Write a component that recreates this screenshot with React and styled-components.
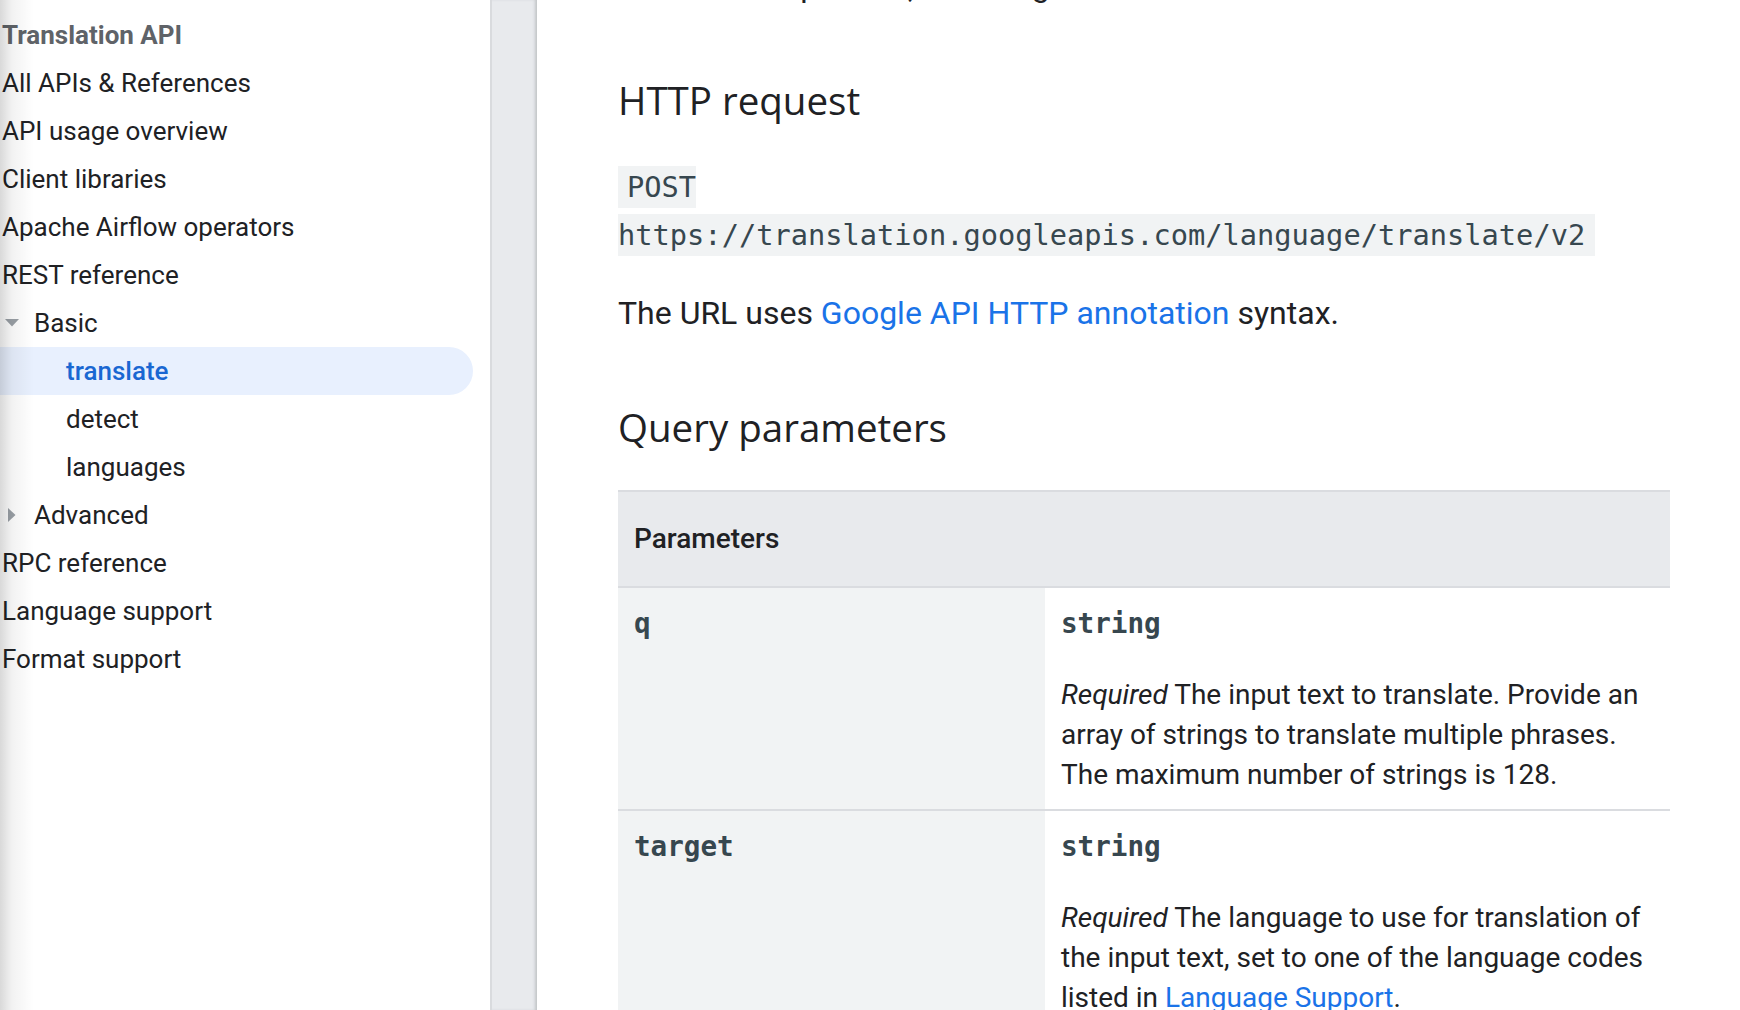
import React from "react";
import styled, { createGlobalStyle, css } from "styled-components";

const GlobalStyle = createGlobalStyle`
  html, body {
    margin: 0;
    padding: 0;
    height: 100%;
    overflow: hidden;
    background: #fff;
  }
  body {
    font-family: Roboto, "Noto Sans", Arial, sans-serif;
    color: #202124;
    -webkit-font-smoothing: antialiased;
  }
  #root {
    height: 100%;
  }
`;

const Page = styled.div`
  display: flex;
  width: 1740px;
  height: 1010px;
  overflow: hidden;
`;

const Sidebar = styled.nav`
  position: relative;
  flex: none;
  width: 490px;
  padding-top: 11px;
  box-sizing: border-box;
  background: #fff;

  /* scroll shadow lying over the nav on its left edge */
  &::after {
    content: "";
    position: absolute;
    left: 0;
    top: 0;
    bottom: 0;
    width: 40px;
    pointer-events: none;
    background: linear-gradient(
      to right,
      rgba(0, 0, 0, 0.15),
      rgba(0, 0, 0, 0.05) 12px,
      rgba(0, 0, 0, 0) 34px
    );
  }
`;

const NavList = styled.ul`
  list-style: none;
  margin: 0;
  padding: 0;
`;

const NavRow = styled.li`
  display: flex;
  align-items: center;
  height: 48px;
  margin-right: 17px;
  padding-left: ${(p) => (p.$depth === 2 ? "66px" : p.$depth === 1 ? "0" : "2px")};
  font-size: 26px;
  line-height: 48px;
  white-space: nowrap;
  color: #202124;
  border-radius: 0 24px 24px 0;

  ${(p) =>
    p.$title &&
    css`
      color: #5f6368;
      font-weight: 700;
    `}

  ${(p) =>
    p.$active &&
    css`
      background: #e8f0fe;
      color: #1967d2;
      font-weight: 500;
    `}
`;

const Expander = styled.span`
  display: flex;
  align-items: center;
  justify-content: center;
  width: 23px;
  height: 48px;
  margin-right: 11px;
`;

const Gutter = styled.div`
  flex: none;
  width: 47px;
  box-sizing: border-box;
  background: #e8eaed;
  border-left: 2px solid #d9dbde;
  box-shadow: inset -3px 0 3px -1px rgba(60, 64, 67, 0.22);
`;

const Main = styled.main`
  flex: 1;
  min-width: 0;
  overflow: hidden;
  padding: 0 70px 0 81px;
`;

const Article = styled.article`
  width: 1052px;
`;

const Lead = styled.p`
  margin: -38px 0 0;
  font-size: 32px;
  line-height: 48px;
`;

const Heading = styled.h2`
  margin: 66px 0 0;
  font-family: "Open Sans", Roboto, sans-serif;
  font-size: 38.5px;
  line-height: 48px;
  font-weight: 400;
  color: #202124;
`;

const Request = styled.div`
  display: flex;
  flex-direction: column;
  align-items: flex-start;
  gap: 6px;
  margin-top: 42px;
`;

const CodeLine = styled.code`
  display: inline-block;
  height: 42px;
  line-height: 42px;
  padding: 0 ${(p) => p.$right || 0}px 0 ${(p) => p.$left || 0}px;
  font-family: "DejaVu Sans Mono", "Liberation Mono", monospace;
  font-size: 28.7px;
  color: #37474f;
  background: #f1f3f4;
`;

const Text = styled.p`
  margin: 33px 0 0;
  font-size: 32px;
  line-height: 48px;
`;

const Link = styled.a`
  color: #1a73e8;
  text-decoration: none;
`;

const ParamTable = styled.div`
  margin-top: 39px;
  border-top: 2px solid #dadce0;
`;

const HeaderCell = styled.div`
  padding: 27px 16px;
  background: #e8eaed;
  font-size: 28px;
  line-height: 40px;
  font-weight: 500;
`;

const ParamRow = styled.div`
  display: grid;
  grid-template-columns: 427px 1fr;
  border-top: 2px solid #dadce0;
`;

const Cell = styled.div`
  padding: 16px 16px 14px;
  background: ${(p) => (p.$name ? "#f1f3f4" : "#fff")};
  font-size: 28px;
  line-height: 40px;
`;

const Mono = styled.code`
  display: block;
  font-family: "DejaVu Sans Mono", "Liberation Mono", monospace;
  font-size: 27.6px;
  line-height: 40px;
  font-weight: 700;
  color: #37474f;
`;

const Desc = styled.p`
  margin: 31px 0 0;
`;

const ArrowDown = () => (
  <svg width="14" height="8" viewBox="0 0 14 8">
    <path d="M0 0h14L7 7.5z" fill="#9aa0a6" />
  </svg>
);

const ArrowRight = () => (
  <svg width="8" height="14" viewBox="0 0 8 14">
    <path d="M0 0v14l7.5-7z" fill="#9aa0a6" />
  </svg>
);

const navItems = [
  { label: "Translation API", title: true },
  { label: "All APIs & References" },
  { label: "API usage overview" },
  { label: "Client libraries" },
  { label: "Apache Airflow operators" },
  { label: "REST reference" },
  { label: "Basic", depth: 1, open: true },
  { label: "translate", depth: 2, active: true },
  { label: "detect", depth: 2 },
  { label: "languages", depth: 2 },
  { label: "Advanced", depth: 1 },
  { label: "RPC reference" },
  { label: "Language support" },
  { label: "Format support" },
];

const params = [
  {
    name: "q",
    type: "string",
    desc: "The input text to translate. Provide an array of strings to translate multiple phrases. The maximum number of strings is 128.",
  },
  {
    name: "target",
    type: "string",
    desc: (
      <>
        The language to use for translation of the input text, set to one of the
        language codes listed in <Link href="#">Language Support</Link>.
      </>
    ),
  },
];

const App = () => {
  return (
    <Page>
      <GlobalStyle />
      <Sidebar>
        <NavList>
          {navItems.map((item) => (
            <NavRow
              key={item.label}
              $depth={item.depth || 0}
              $title={item.title}
              $active={item.active}
            >
              {item.depth === 1 && (
                <Expander>{item.open ? <ArrowDown /> : <ArrowRight />}</Expander>
              )}
              {item.label}
            </NavRow>
          ))}
        </NavList>
      </Sidebar>

      <Gutter />

      <Main>
        <Article>
          <Lead>Translates input text, returning translated text.</Lead>

          <Heading>HTTP request</Heading>
          <Request>
            <CodeLine $left={9}>POST</CodeLine>
            <CodeLine $right={10}>
              https://translation.googleapis.com/language/translate/v2
            </CodeLine>
          </Request>
          <Text>
            The URL uses <Link href="#">Google API HTTP annotation</Link> syntax.
          </Text>

          <Heading>Query parameters</Heading>
          <ParamTable>
            <HeaderCell>Parameters</HeaderCell>
            {params.map((p) => (
              <ParamRow key={p.name}>
                <Cell $name>
                  <Mono>{p.name}</Mono>
                </Cell>
                <Cell>
                  <Mono>{p.type}</Mono>
                  <Desc>
                    <i>Required</i> {p.desc}
                  </Desc>
                </Cell>
              </ParamRow>
            ))}
          </ParamTable>
        </Article>
      </Main>
    </Page>
  );
};

export default App;
